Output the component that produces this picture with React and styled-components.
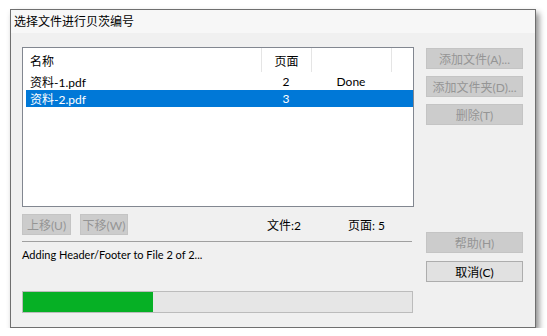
import React from "react";
import styled, { createGlobalStyle } from "styled-components";

const GlobalStyle = createGlobalStyle`
  html, body {
    margin: 0;
    padding: 0;
    background: #ffffff;
  }
  body {
    font-family: Lato, "Noto Sans CJK SC", sans-serif;
    font-size: 12px;
    color: #000;
  }
`;

const files = [
  { name: "资料-1.pdf", pages: 2, status: "Done" },
  { name: "资料-2.pdf", pages: 3, status: "", selected: true },
];

const Page = styled.div`
  padding: 9px 0 0 10px;
`;

const Window = styled.div`
  width: 526px;
  box-sizing: border-box;
  border: 1px solid #6f6f6f;
  box-shadow: 3px 4px 6px rgba(0, 0, 0, 0.45);
  background: #f0f0f0;
`;

const TitleBar = styled.div`
  height: 23px;
  line-height: 22px;
  padding-left: 3px;
  background: #f7f7f7;
  font-family: "Noto Sans CJK SC", sans-serif;
  font-size: 12px;
`;

const Body = styled.div`
  display: grid;
  grid-template-columns: 392px 97px;
  column-gap: 12px;
  padding: 14px 11px 14px 11px;
`;

const LeftColumn = styled.div`
  display: flex;
  flex-direction: column;
`;

const ListBox = styled.div`
  height: 160px;
  box-sizing: border-box;
  border: 1px solid #828790;
  background: #ffffff;
`;

const HeaderRow = styled.div`
  display: grid;
  grid-template-columns: 239px 50px 80px;
  height: 24px;
  margin-bottom: 1px;
`;

const HeaderCell = styled.div`
  display: flex;
  align-items: center;
  justify-content: ${(p) => (p.$left ? "flex-start" : "center")};
  padding-left: ${(p) => (p.$left ? "7px" : "0")};
  border-right: 1px solid #e5e5e5;
  font-family: "Noto Sans CJK SC", sans-serif;
`;

const Row = styled.div`
  display: grid;
  grid-template-columns: 235px 50px 80px;
  height: 17px;
  margin-left: 3px;
  background: ${(p) => (p.$selected ? "#0078d7" : "transparent")};
  color: ${(p) => (p.$selected ? "#ffffff" : "#000000")};
`;

const Cell = styled.div`
  display: flex;
  align-items: center;
  justify-content: ${(p) => (p.$left ? "flex-start" : "center")};
  padding-left: ${(p) => (p.$left ? "4px" : "0")};
`;

const ActionRow = styled.div`
  display: flex;
  align-items: center;
  margin-top: 7px;
  height: 21px;
`;

const Button = styled.div`
  display: flex;
  align-items: center;
  justify-content: center;
  box-sizing: border-box;
  width: ${(p) => p.$width || 97}px;
  height: 21px;
  margin-left: ${(p) => p.$gap || 0}px;
  border: 1px solid ${(p) => (p.$disabled ? "#c4c4c4" : "#adadad")};
  background: ${(p) => (p.$disabled ? "#cccccc" : "#e1e1e1")};
  color: ${(p) => (p.$disabled ? "#959595" : "#000000")};
  font-size: 12px;
  white-space: nowrap;
`;

const Stat = styled.div`
  width: ${(p) => p.$width}px;
  margin-left: ${(p) => p.$gap || 0}px;
`;

const Separator = styled.div`
  margin-top: 6px;
  width: 390px;
  height: 1px;
  background: #a0a0a0;
`;

const Status = styled.div`
  margin-top: 5px;
  line-height: 16px;
  font-size: 11px;
`;

const Progress = styled.div`
  margin-top: 28px;
  width: 391px;
  height: 22px;
  box-sizing: border-box;
  border: 1px solid #bcbcbc;
  background: #e6e6e6;
`;

const ProgressFill = styled.div`
  height: 100%;
  background: #06b025;
`;

const RightColumn = styled.div`
  display: flex;
  flex-direction: column;
  padding-top: 1px;
  gap: 7px;
`;

const BottomButtons = styled.div`
  display: flex;
  flex-direction: column;
  gap: 8px;
  margin-top: 100px;
`;

export default function App() {
  const progress = 130 / 389;
  return (
    <>
      <GlobalStyle />
      <Page>
        <Window>
          <TitleBar>选择文件进行贝茨编号</TitleBar>
          <Body>
            <LeftColumn>
              <ListBox>
                <HeaderRow>
                  <HeaderCell $left>名称</HeaderCell>
                  <HeaderCell>页面</HeaderCell>
                  <HeaderCell />
                </HeaderRow>
                {files.map((f) => (
                  <Row key={f.name} $selected={f.selected}>
                    <Cell $left>{f.name}</Cell>
                    <Cell>{f.pages}</Cell>
                    <Cell>{f.status}</Cell>
                  </Row>
                ))}
              </ListBox>
              <ActionRow>
                <Button $disabled $width={49}>上移(U)</Button>
                <Button $disabled $width={48} $gap={9}>下移(W)</Button>
                <Stat $width={81} $gap={139}>文件:2</Stat>
                <Stat $width={60}>页面: 5</Stat>
              </ActionRow>
              <Separator />
              <Status>Adding Header/Footer to File 2 of 2...</Status>
              <Progress>
                <ProgressFill style={{ width: `${progress * 100}%` }} />
              </Progress>
            </LeftColumn>
            <RightColumn>
              <Button $disabled>添加文件(A)...</Button>
              <Button $disabled>添加文件夹(D)...</Button>
              <Button $disabled>删除(T)</Button>
              <BottomButtons>
                <Button $disabled>帮助(H)</Button>
                <Button>取消(C)</Button>
              </BottomButtons>
            </RightColumn>
          </Body>
        </Window>
      </Page>
    </>
  );
}
